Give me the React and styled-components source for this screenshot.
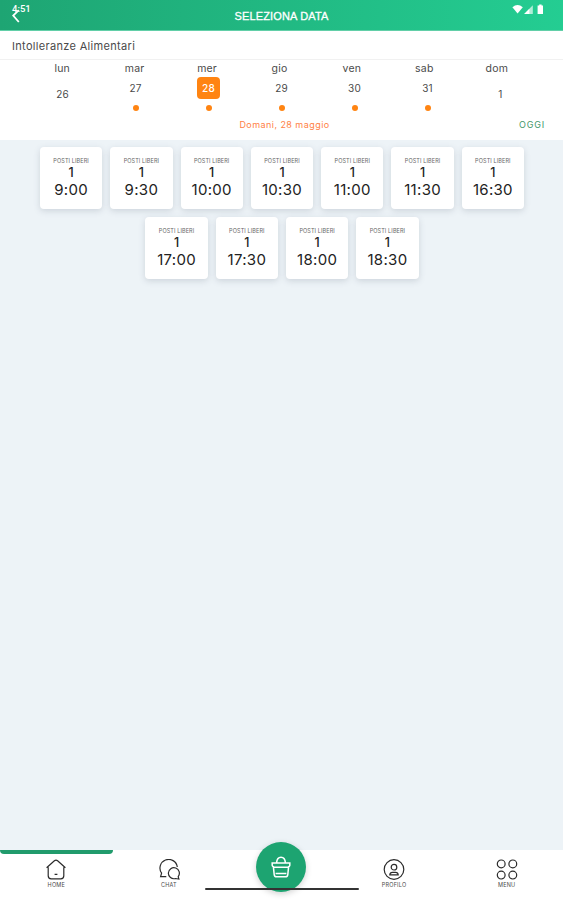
import { useState } from "react";
import styled, { createGlobalStyle } from "styled-components";

const days = [
  { name: "lun", number: 26, free: false },
  { name: "mar", number: 27, free: true },
  { name: "mer", number: 28, free: true },
  { name: "gio", number: 29, free: true },
  { name: "ven", number: 30, free: true },
  { name: "sab", number: 31, free: true },
  { name: "dom", number: 1, free: false },
];

const slots = [
  "9:00",
  "9:30",
  "10:00",
  "10:30",
  "11:00",
  "11:30",
  "16:30",
  "17:00",
  "17:30",
  "18:00",
  "18:30",
];

const HomeIcon = () => (
  <svg width="20" height="21" viewBox="0 0 20 21">
    <path d="M2.2 8.2V16.8Q2.2 19.8 5.2 19.8H14.8Q17.8 19.8 17.8 16.8V8.2M.6 8.8L8.4 1.7Q10 .4 11.6 1.7L19.4 8.8M8.6 15.4H11.4" />
  </svg>
);

const ChatIcon = () => (
  <svg width="22" height="21" viewBox="0 0 22 21">
    <path d="M19.3 8A8.7 8.7 0 1 0 3.6 14.2L2.6 17.7H8.3" />
    <path d="M20.2 17.6A5.5 5.5 0 1 0 17.4 19.5L20.9 20Z" />
  </svg>
);

const ProfileIcon = () => (
  <svg width="22" height="21" viewBox="0 0 22 21">
    <circle cx="11" cy="10.5" r="9.8" />
    <circle cx="11" cy="8.2" r="2.8" />
    <path d="M6.8 15.8Q7 13.4 9.4 13.4H12.6Q15 13.4 15.2 15.8Z" />
  </svg>
);

const MenuIcon = () => (
  <svg width="22" height="21" viewBox="0 0 22 21">
    <circle cx="5.2" cy="4.9" r="3.9" />
    <circle cx="16.8" cy="4.9" r="3.9" />
    <circle cx="5.2" cy="16.1" r="3.9" />
    <circle cx="16.8" cy="16.1" r="3.9" />
  </svg>
);

const BasketIcon = () => (
  <svg width="20" height="22" viewBox="0 0 20 22">
    <path d="M1.2 7H18.8V9.4Q18.6 10.4 17.6 10.8L16.8 18.6Q16.5 20.8 14.4 20.8H5.6Q3.5 20.8 3.2 18.6L2.4 10.8Q1.4 10.4 1.2 9.4ZM5.6 6.8Q6 1.2 10 1.2T14.4 6.8M2.6 11.2H17.4M4.6 17.4H15.4" />
  </svg>
);

const App = () => {
  const [selected, setSelected] = useState(28);

  return (
    <Screen>
      <GlobalStyle />
      <Header>
        <Clock>4:51</Clock>
        <BackButton aria-label="Indietro">
          <svg width="8" height="14" viewBox="0 0 8 14">
            <path d="M6.8 1.2L1.2 6.6L6.8 13" fill="none" stroke="#fff" strokeWidth="1.8" />
          </svg>
        </BackButton>
        <Title>SELEZIONA DATA</Title>
        <StatusIcons>
          <svg width="33" height="11" viewBox="0 0 33 11" fill="#fff">
            <path d="M.4 3.2Q5.5-1.2 10.8 3.2L5.6 9.6Z" />
            <path d="M12.2 10L20.8 1.2V10Z" opacity=".65" />
            <path d="M12.2 10L17.4 4.7V10Z" />
            <path d="M26 1.4H27.2V.6H29.6V1.4H31V10H25.6V1.4Z" />
          </svg>
        </StatusIcons>
      </Header>

      <Service>Intolleranze Alimentari</Service>

      <Calendar>
        <WeekNames>
          {days.map((day) => (
            <span key={day.name}>{day.name}</span>
          ))}
        </WeekNames>
        <WeekDays>
          {days.map((day) => (
            <Day key={day.number} onClick={() => setSelected(day.number)}>
              <DayNumber $selected={day.number === selected} $free={day.free}>
                {day.number}
              </DayNumber>
              {day.free && <Dot />}
            </Day>
          ))}
        </WeekDays>
        <CalendarFooter>
          <SelectedDate>Domani, 28 maggio</SelectedDate>
          <Today onClick={() => setSelected(27)}>OGGI</Today>
        </CalendarFooter>
      </Calendar>

      <Slots>
        {slots.map((time) => (
          <Slot key={time}>
            <SlotLabel>POSTI LIBERI</SlotLabel>
            <SlotCount>1</SlotCount>
            <SlotTime>{time}</SlotTime>
          </Slot>
        ))}
      </Slots>

      <TabBar>
        <Tab $active>
          <HomeIcon />
          HOME
        </Tab>
        <Tab>
          <ChatIcon />
          CHAT
        </Tab>
        <Tab>
          <BasketButton aria-label="Carrello">
            <BasketIcon />
          </BasketButton>
        </Tab>
        <Tab>
          <ProfileIcon />
          PROFILO
        </Tab>
        <Tab>
          <MenuIcon />
          MENU
        </Tab>
        <HomeIndicator />
      </TabBar>
    </Screen>
  );
};

export default App;

const GlobalStyle = createGlobalStyle`
  * {
    box-sizing: border-box;
  }
  body {
    margin: 0;
  }
  button {
    border: none;
    background: none;
    padding: 0;
    font: inherit;
    color: inherit;
    cursor: pointer;
  }
`;

const Screen = styled.div`
  display: flex;
  flex-direction: column;
  width: 100%;
  height: 900px;
  background-color: #edf3f7;
  font-family: Inter, sans-serif;
  color: #4a4a4a;
  overflow: hidden;
`;

const Header = styled.header`
  position: relative;
  flex: none;
  display: flex;
  justify-content: center;
  align-items: center;
  height: 31px;
  background: linear-gradient(90deg, #1ea573, #24cd92);
  border-bottom: 1px solid #62cfa8;
  color: white;
`;

/* the system clock is drawn over the back arrow */
const Clock = styled.span`
  position: absolute;
  top: 3px;
  left: 12px;
  font-family: Roboto, sans-serif;
  font-size: 9.5px;
  line-height: 11px;
  font-weight: 500;
`;

const BackButton = styled.button`
  position: absolute;
  top: 9px;
  left: 12px;
  height: 14px;
  display: flex;
`;

const Title = styled.h1`
  margin: 1px 0 0;
  font-family: "Liberation Sans", Arial, sans-serif;
  font-size: 11px;
  font-weight: 400;
  line-height: 14px;
  letter-spacing: 0.15px;
  -webkit-text-stroke: 0.3px white;
`;

const StatusIcons = styled.div`
  position: absolute;
  top: 4px;
  right: 18px;
  display: flex;
`;

const Service = styled.div`
  flex: none;
  height: 28px;
  padding-left: 12px;
  background-color: white;
  font-size: 11px;
  line-height: 30px;
  letter-spacing: 0.32px;
`;

const Calendar = styled.section`
  flex: none;
  height: 81px;
  background-color: white;
  border-top: 1px solid #f1f1f1;
`;

const WeekNames = styled.div`
  display: grid;
  grid-template-columns: repeat(7, 1fr);
  padding: 2px 30px 0 26px;
  font-size: 10.5px;
  line-height: 14px;
  letter-spacing: 0.2px;
  text-align: center;
`;

const WeekDays = styled.div`
  display: grid;
  grid-template-columns: repeat(7, 1fr);
  height: 37px;
  padding: 2px 26px 0;
`;

const Day = styled.button`
  display: flex;
  flex-direction: column;
  align-items: center;
`;

const DayNumber = styled.span`
  width: 23px;
  height: 22px;
  margin-top: ${(props) => (props.$free ? "-1px" : "5px")};
  border-radius: 4px;
  background-color: ${(props) => (props.$selected ? "#ff8412" : "transparent")};
  color: ${(props) => (props.$selected ? "white" : "#4a4a4a")};
  font-size: 10px;
  font-weight: ${(props) => (props.$selected ? 500 : 400)};
  line-height: 22px;
  letter-spacing: 0.2px;
`;

const Dot = styled.i`
  width: 6px;
  height: 6px;
  margin-top: 6px;
  border-radius: 50%;
  background-color: #ff8412;
`;

const CalendarFooter = styled.div`
  display: grid;
  grid-template-columns: 1fr auto 1fr;
  padding: 6px 18px 0 24px;
  font-size: 9px;
  line-height: 12px;
  letter-spacing: 0.45px;
`;

const SelectedDate = styled.span`
  grid-column: 2;
  color: #ff7f45;
`;

const Today = styled.button`
  justify-self: end;
  letter-spacing: 0.8px;
  color: #3f9669;
`;

const Slots = styled.main`
  flex: 1;
  display: flex;
  flex-wrap: wrap;
  justify-content: center;
  align-content: flex-start;
  gap: 8px;
  padding: 7px 30px 0 31px;
`;

const Slot = styled.button`
  display: flex;
  flex-direction: column;
  align-items: center;
  width: 62.3px;
  height: 62px;
  padding-top: 11px;
  border-radius: 4px;
  background-color: white;
  box-shadow: 0 2px 6px rgba(90, 105, 125, 0.22);
  color: #222;
`;

const SlotLabel = styled.span`
  font-size: 5.5px;
  line-height: 6px;
  letter-spacing: 0.1px;
  color: #666;
`;

const SlotCount = styled.span`
  font-size: 12.5px;
  line-height: 17px;
  font-weight: 500;
`;

const SlotTime = styled.span`
  font-size: 15px;
  line-height: 17px;
  letter-spacing: 0.3px;
`;

const TabBar = styled.nav`
  position: relative;
  flex: none;
  display: grid;
  grid-template-columns: repeat(5, 1fr);
  height: 50px;
  background-color: white;
`;

const Tab = styled.div`
  display: flex;
  flex-direction: column;
  align-items: center;
  gap: 2px;
  padding-top: 9px;
  font-size: 5.5px;
  line-height: 7px;
  letter-spacing: 0.2px;

  &::before {
    content: "";
    position: absolute;
    top: 0;
    left: 0;
    display: ${(props) => (props.$active ? "block" : "none")};
    width: 20%;
    height: 4px;
    border-radius: 0 0 4px 4px;
    background-color: #219b6c;
  }

  svg {
    fill: none;
    stroke: #2b2b2b;
    stroke-width: 1.2;
  }
`;

const BasketButton = styled.button`
  flex: none;
  display: flex;
  justify-content: center;
  align-items: center;
  width: 50px;
  height: 50px;
  margin-top: -17px;
  border-radius: 50%;
  background-color: #1da471;
  box-shadow: 0 2px 6px rgba(0, 0, 0, 0.18);

  svg {
    stroke: white;
    stroke-width: 1.5;
  }
`;

/* system gesture bar */
const HomeIndicator = styled.div`
  position: absolute;
  bottom: 10px;
  left: 50%;
  width: 154px;
  height: 2px;
  border-radius: 1px;
  transform: translateX(-50%);
  background-color: #333;
`;
